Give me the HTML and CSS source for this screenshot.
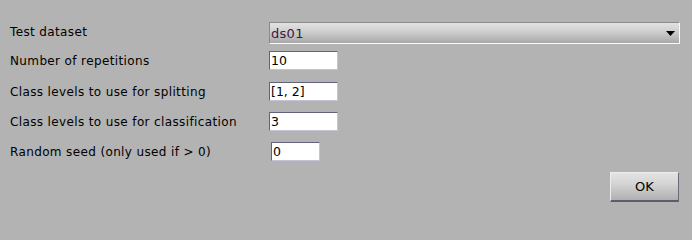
FILE: index.html
```html
<!DOCTYPE html>
<html>
<head>
<meta charset="utf-8">
<link rel="stylesheet" href="styles.css">
</head>
<body>
<div class="dialog">
  <div class="form">
    <div class="row row-first">
      <span class="label">Test dataset</span>
      <div class="select">
        <span class="select-value">ds01</span>
        <svg class="arrow" width="9" height="5" viewBox="0 0 9 5"><polygon points="0,0 9,0 4.5,5" fill="#000"/></svg>
      </div>
    </div>
    <div class="row row-second">
      <span class="label">Number of repetitions</span>
      <div class="field">10</div>
    </div>
    <div class="row row-third">
      <span class="label">Class levels to use for splitting</span>
      <div class="field">[1, 2]</div>
    </div>
    <div class="row">
      <span class="label">Class levels to use for classification</span>
      <div class="field">3</div>
    </div>
    <div class="row">
      <span class="label">Random seed (only used if &gt; 0)</span>
      <div class="field field-small">0</div>
    </div>
  </div>
  <div class="actions">
    <button class="btn">OK</button>
  </div>
</div>
</body>
</html>
```

FILE: styles.css
```css
html, body {
  margin: 0;
  padding: 0;
  background: #b3b3b3;
}
body {
  font-family: "DejaVu Sans", sans-serif;
  font-size: 12px;
  color: #000;
  width: 692px;
  height: 210px;
  overflow: hidden;
}
.dialog {
  padding: 22px 12px 0 10px;
  display: flex;
  flex-direction: column;
}
.form {
  display: flex;
  flex-direction: column;
}
.row {
  display: flex;
  align-items: center;
  margin-top: 11px;
}
.row-first { margin-top: 0; }
.row-second { margin-top: 7px; }
.row-third { margin-top: 12px; }
.label {
  width: 259px;
  flex: none;
  white-space: nowrap;
  color: #000;
  letter-spacing: 0.37px;
}
.row-first .label {
  position: relative;
  top: -1px;
}
.select {
  flex: 1;
  height: 22px;
  box-sizing: border-box;
  border-top: 1px solid #8a8a8a;
  border-left: 1px solid #8a8a8a;
  border-right: 1px solid #fafafa;
  border-bottom: 1px solid #fafafa;
  background: linear-gradient(to bottom, #e2e2e2 0%, #d2d2d2 35%, #bdbdbd 70%, #a8a8a8 100%);
  display: flex;
  align-items: center;
  justify-content: space-between;
  padding: 0 4px 0 1px;
}
.select-value {
  font-size: 13px;
  color: #3a1840;
  letter-spacing: 0.3px;
}
.arrow {
  display: block;
  margin-top: 1px;
}
.field {
  width: 69px;
  height: 19px;
  box-sizing: border-box;
  background: #fff;
  border-top: 1px solid #62627a;
  border-left: 1px solid #62627a;
  border-right: 1px solid #c4c4d6;
  border-bottom: 1px solid #c4c4d6;
  padding: 0 0 0 1px;
  line-height: 17px;
  font-size: 12.5px;
  color: #000;
}
.field-small {
  width: 49px;
  margin-left: 2px;
}
.actions {
  display: flex;
  justify-content: flex-end;
  margin-top: 11px;
  padding-right: 1px;
}
.btn {
  width: 69px;
  height: 30px;
  box-sizing: border-box;
  margin: 0;
  padding: 0;
  font-family: "DejaVu Sans", sans-serif;
  font-size: 13px;
  color: #000;
  background: linear-gradient(to bottom, #e4e4e4 0%, #d4d4d4 40%, #bcbcbc 80%, #b0b0b0 100%);
  border-top: 1px solid #ececec;
  border-left: 1px solid #ececec;
  border-right: 1px solid #6a6a78;
  border-bottom: 2px solid #5c5c6c;
}
```
